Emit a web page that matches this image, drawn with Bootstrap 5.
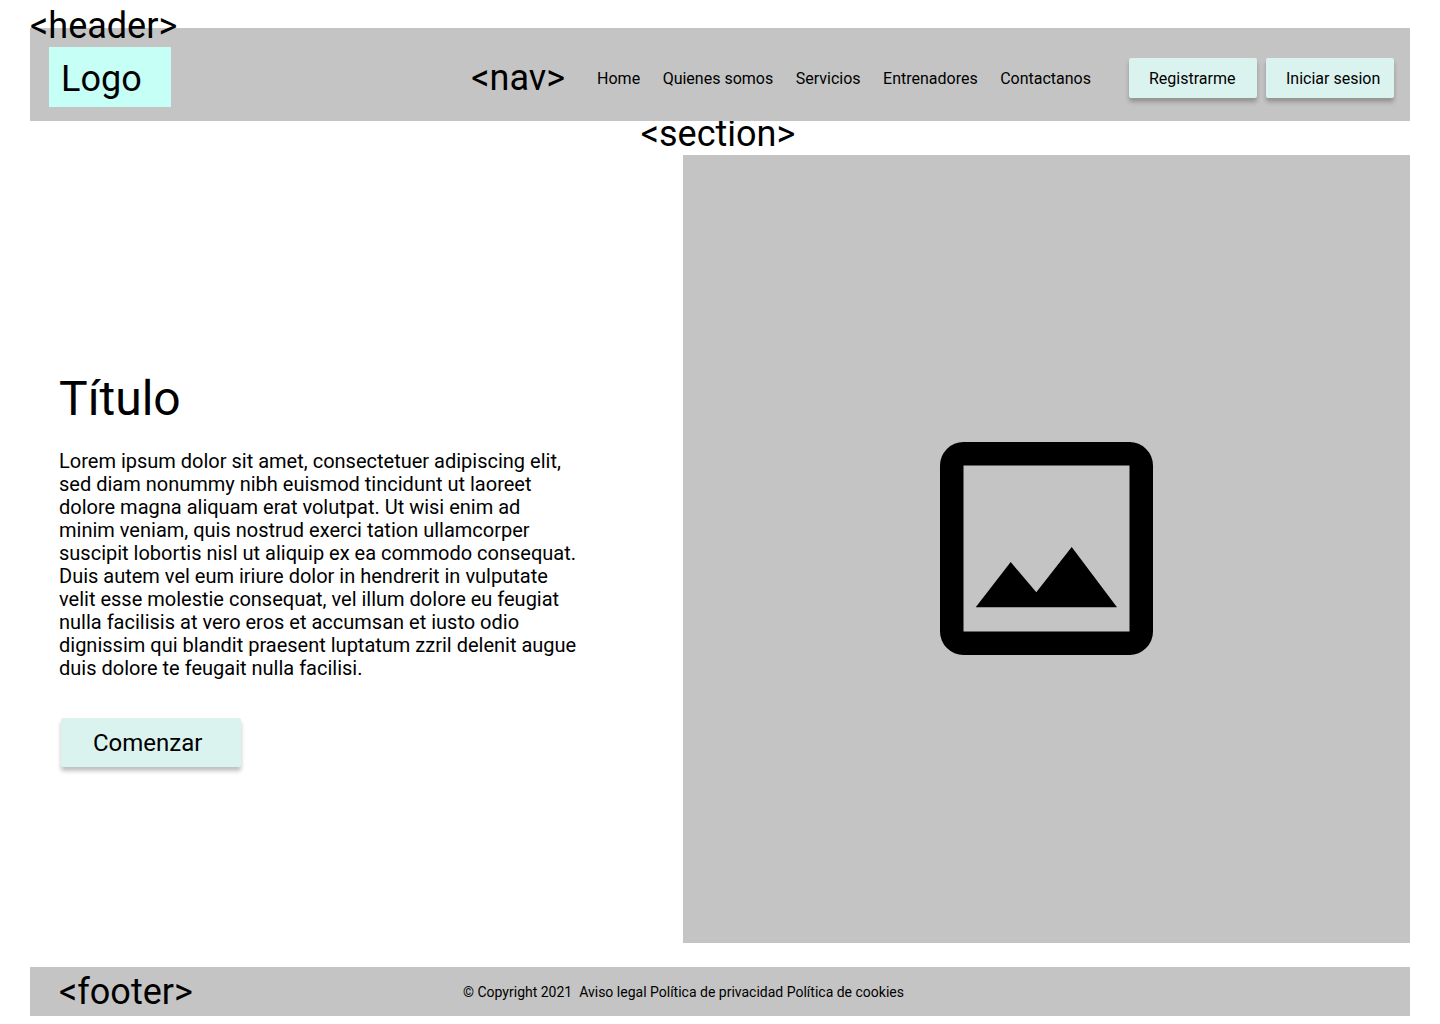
<!DOCTYPE html>
<html lang="es">
<head>
    <title>Wireframe</title>
    <meta charset="UTF-8">
    <link href="https://cdn.jsdelivr.net/npm/bootstrap@5.3.0/dist/css/bootstrap.min.css" rel="stylesheet">
    <style>
        body { font-family: Roboto, "Liberation Sans", sans-serif; color: #000; background: #fff; }
        .page-wrap { padding: 28px 30px 0; }
        .wire-gray { background: #c4c4c4; }
        .tag-label { font-size: 36px; line-height: 42px; color: #000; }
        .site-header { height: 93px; padding: 7px 16px 0 19px; }
        .header-tag { position: absolute; left: 0; top: -23px; }
        .logo-box { width: 122px; height: 60px; margin-bottom: 2px; background: #c6fff5; font-size: 36px; line-height: 42px; padding: 11px 0 0 12px; }
        .nav-tag { margin-right: 32px; }
        .site-nav { gap: 22.5px; margin-right: 38px; }
        .site-nav .nav-link { padding: 0; color: #000; font-size: 16px; line-height: 19px; }
        .head-btns { gap: 9px; }
        .wire-btn { background: #dbf3ef; color: #000; border: 0; border-radius: 2px; box-shadow: 0 4px 4px rgba(0, 0, 0, .25); }
        .wire-btn:hover { background: #dbf3ef; color: #000; }
        .head-btn { width: 128px; height: 40px; font-size: 16px; line-height: 19px; padding: 0 0 0 20px; text-align: left; }
        .section-tag { height: 34px; line-height: 27px; padding-right: 4px; }
        .hero { height: 788px; }
        .hero-text { width: 653px; padding-left: 29px; padding-top: 40px; }
        .hero-title { font-size: 48px; line-height: 56px; font-weight: 400; margin-bottom: 23px; }
        .hero-copy { font-size: 20px; line-height: 23px; width: 520px; margin-bottom: 38px; }
        .hero-btn { width: 180px; height: 49px; margin-left: 2px; font-size: 24px; line-height: 28px; padding: 0 0 0 32px; text-align: left; }
        .hero-image { width: 727px; }
        .hero-icon { margin-bottom: 2px; }
        .site-footer { height: 49px; margin-top: 24px; padding-left: 29px; }
        .footer-tag { width: 404px; }
        .footer-text { font-size: 14px; line-height: 16px; }
    </style>
</head>
<body>
<div class="page-wrap">
    <header class="site-header wire-gray d-flex align-items-center position-relative">
        <div class="tag-label header-tag">&lt;header&gt;</div>
        <div class="logo-box">Logo</div>
        <div class="ms-auto d-flex align-items-center">
            <div class="tag-label nav-tag">&lt;nav&gt;</div>
            <nav class="nav site-nav">
                <a class="nav-link" href="#">Home</a>
                <a class="nav-link" href="#">Quienes somos</a>
                <a class="nav-link" href="#">Servicios</a>
                <a class="nav-link" href="#">Entrenadores</a>
                <a class="nav-link" href="#">Contactanos</a>
            </nav>
            <div class="d-flex head-btns">
                <button type="button" class="btn wire-btn head-btn">Registrarme</button>
                <button type="button" class="btn wire-btn head-btn">Iniciar sesion</button>
            </div>
        </div>
    </header>

    <div class="tag-label section-tag text-center">&lt;section&gt;</div>

    <section class="hero d-flex">
        <div class="hero-text d-flex flex-column justify-content-center align-items-start">
            <h1 class="hero-title">Título</h1>
            <p class="hero-copy">Lorem ipsum dolor sit amet, consectetuer adipiscing elit, sed diam nonummy nibh euismod tincidunt ut laoreet dolore magna aliquam erat volutpat. Ut wisi enim ad minim veniam, quis nostrud exerci tation ullamcorper suscipit lobortis nisl ut aliquip ex ea commodo consequat. Duis autem vel eum iriure dolor in hendrerit in vulputate velit esse molestie consequat, vel illum dolore eu feugiat nulla facilisis at vero eros et accumsan et iusto odio dignissim qui blandit praesent luptatum zzril delenit augue duis dolore te feugait nulla facilisi.</p>
            <button type="button" class="btn wire-btn hero-btn">Comenzar</button>
        </div>
        <div class="hero-image wire-gray d-flex align-items-center justify-content-center">
            <svg class="hero-icon" width="213" height="213" viewBox="0 0 213 213" aria-hidden="true">
                <path fill="#000" fill-rule="evenodd" d="M23.500 0H189.500A23.500 23.500 0 0 1 213 23.500V189.500A23.500 23.500 0 0 1 189.500 213H23.500A23.500 23.500 0 0 1 0 189.500V23.500A23.500 23.500 0 0 1 23.500 0ZM23.500 23.500V189.500H189.500V23.500Z"/>
                <path fill="#000" d="M35.700 165.300L70.700 120L96.300 150.300L131.700 105L177 165.300Z"/>
            </svg>
        </div>
    </section>

    <footer class="site-footer wire-gray d-flex align-items-center">
        <div class="tag-label footer-tag">&lt;footer&gt;</div>
        <div class="footer-text">© Copyright 2021&nbsp; Aviso legal Política de privacidad Política de cookies</div>
    </footer>
</div>
<script src="https://cdn.jsdelivr.net/npm/bootstrap@5.3.0/dist/js/bootstrap.bundle.min.js"></script>
</body>
</html>
